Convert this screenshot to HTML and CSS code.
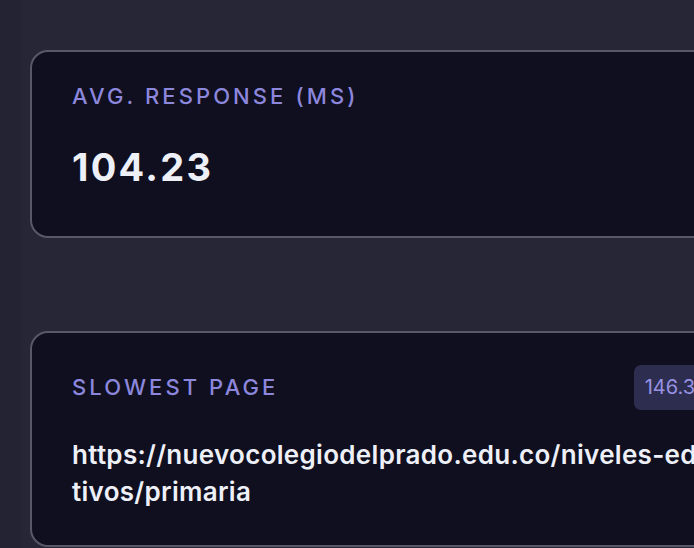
FILE: index.html
```html
<!DOCTYPE html>
<html lang="en">
<head>
    <meta charset="UTF-8">
    <meta name="viewport" content="width=device-width, initial-scale=1.0">
    <title>Performance Summary</title>
    <link rel="stylesheet" href="styles.css">
</head>
<body>

<main class="stats">
    <section class="card card-avg">
        <h3 class="card-label">Avg. Response (ms)</h3>
        <p class="card-value">104.23</p>
    </section>

    <section class="card card-slowest">
        <div class="card-head">
            <h3 class="card-label">Slowest Page</h3>
            <span class="badge">146.32 ms</span>
        </div>
        <p class="card-url">https://nuevocolegiodelprado.edu.co/niveles-educativos/primaria</p>
    </section>
</main>

</body>
</html>
```

FILE: styles.css
```css
body {
    font-family: Inter, "Noto Sans", sans-serif;
    background: linear-gradient(to right, #232334 22px, #262637 22px);
    margin: 0;
    overflow: hidden;
}

.stats {
    display: flex;
    flex-direction: column;
    gap: 93px;
    width: 764px;
    padding: 50px 0 0 30px;
}

.card {
    background-color: #0f0f20;
    border: 2px solid #585868;
    border-radius: 18px;
    padding: 31px 40px 47px;
}

.card-label {
    margin: 0;
    font-size: 22px;
    font-weight: 500;
    line-height: 27px;
    letter-spacing: 0.14em;
    text-transform: uppercase;
    color: #8c87dc;
}

.card-value {
    margin: 35px 0 0;
    font-size: 38px;
    font-weight: 700;
    line-height: 44px;
    letter-spacing: 0.06em;
    color: #eef0f8;
}

.card-slowest {
    padding-top: 32px;
    padding-bottom: 35px;
}

.card-head {
    display: flex;
    justify-content: space-between;
    align-items: center;
}

.badge {
    background-color: #2d2d50;
    color: #9792e2;
    font-size: 20px;
    line-height: 45px;
    padding: 0 11px;
    border-radius: 7px;
}

.card-url {
    margin: 26px 0 0;
    font-size: 26px;
    font-weight: 600;
    line-height: 37px;
    letter-spacing: 0.3px;
    color: #eef0f8;
    word-break: break-all;
}
```
